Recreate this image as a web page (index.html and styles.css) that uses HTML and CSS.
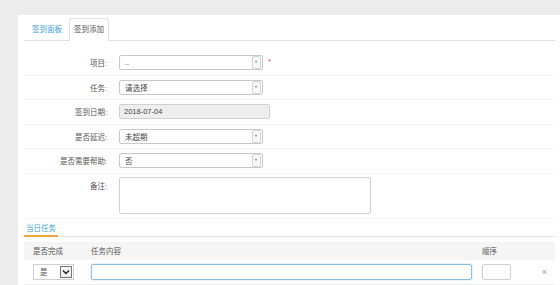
FILE: index.html
```html
<!DOCTYPE html>
<html lang="zh-CN">
<head>
    <meta charset="UTF-8">
    <title>签到添加</title>
    <link rel="stylesheet" href="styles.css">
</head>
<body>
    <div class="page">
        <div class="panel">
            <div class="tabs">
                <a href="#" class="tab">签到面板</a>
                <a href="#" class="tab active">签到添加</a>
            </div>

            <form class="form">
                <div class="row">
                    <label class="label">项目:</label>
                    <div class="select"><span class="value">..</span><span class="arrow"></span></div>
                    <span class="required">*</span>
                </div>
                <div class="row">
                    <label class="label">任务:</label>
                    <div class="select"><span class="value">请选择</span><span class="arrow"></span></div>
                </div>
                <div class="row">
                    <label class="label">签到日期:</label>
                    <input class="text readonly" type="text" value="2018-07-04" readonly>
                </div>
                <div class="row">
                    <label class="label">是否延迟:</label>
                    <div class="select"><span class="value">未超期</span><span class="arrow"></span></div>
                </div>
                <div class="row">
                    <label class="label">是否需要帮助:</label>
                    <div class="select"><span class="value">否</span><span class="arrow"></span></div>
                </div>
                <div class="row row-tall">
                    <label class="label">备注:</label>
                    <textarea class="memo"></textarea>
                </div>
            </form>

            <div class="section">
                <span class="section-title">当日任务</span>
            </div>

            <div class="task-table">
                <div class="task-head">
                    <div class="col-done">是否完成</div>
                    <div class="col-content">任务内容</div>
                    <div class="col-order">顺序</div>
                    <div class="col-del"></div>
                </div>
                <div class="task-row">
                    <div class="col-done">
                        <div class="mini-select">
                            <span>是</span>
                            <span class="mini-arrow">
                                <svg width="8" height="6" viewBox="0 0 8 6"><path d="M1 1.5 L4 4.5 L7 1.5" fill="none" stroke="#222" stroke-width="1.4"/></svg>
                            </span>
                        </div>
                    </div>
                    <div class="col-content"><input class="content-input" type="text"></div>
                    <div class="col-order"><input class="order-input" type="text"></div>
                    <div class="col-del"><span class="del">×</span></div>
                </div>
            </div>
        </div>
    </div>
</body>
</html>
```

FILE: styles.css
```css
body {
    margin: 0;
    background-color: #ececec;
    font-family: "Liberation Sans", "Noto Sans CJK SC", sans-serif;
    font-size: 7.5px;
    color: #555;
}
.page {
    padding: 15px 0 0 18px;
}
.panel {
    background-color: #fff;
    padding: 3px 5px 0 6px;
    height: 270px;
}
.tabs {
    display: flex;
    align-items: flex-end;
    height: 22px;
    padding-left: 3px;
    border-bottom: 1px solid #e2e2e2;
}
.tab {
    display: block;
    height: 22px;
    line-height: 22px;
    padding: 0 4px;
    margin-right: 2px;
    color: #3a9fd9;
    text-decoration: none;
    box-sizing: border-box;
    border: 1px solid transparent;
    border-bottom: none;
}
.tab.active {
    color: #555;
    border-color: #e2e2e2;
    border-radius: 3px 3px 0 0;
    background-color: #fff;
    height: 23px;
    margin-bottom: -1px;
}
.form {
    padding-top: 10px;
}
.row {
    display: flex;
    align-items: center;
    height: 24.5px;
    box-sizing: border-box;
    border-bottom: 1px solid #f4f4f4;
}
.row-tall {
    align-items: flex-start;
    height: 45px;
    padding-top: 3px;
}
.label {
    width: 83px;
    text-align: right;
    padding-right: 12px;
    color: #555;
}
.row-tall .label {
    padding-top: 3px;
}
.select {
    display: flex;
    align-items: center;
    justify-content: space-between;
    width: 144px;
    height: 15px;
    box-sizing: border-box;
    border: 1px solid #c9c9c9;
    border-radius: 2px;
    padding-left: 5px;
    padding-right: 1px;
    background-color: #fff;
}
.select .value {
    color: #444;
}
.select .arrow {
    position: relative;
    width: 7px;
    height: 11px;
    border: 1px solid #d6d6d6;
    border-radius: 2px;
    background-color: #f7f7f7;
}
.select .arrow::after {
    content: "";
    position: absolute;
    left: 2px;
    top: 4px;
    border-left: 1.5px solid transparent;
    border-right: 1.5px solid transparent;
    border-top: 2px solid #777;
}
.required {
    color: #e04a4a;
    margin-left: 5px;
    margin-top: -3px;
}
.text {
    width: 151px;
    height: 15px;
    box-sizing: border-box;
    border: 1px solid #d0d0d0;
    border-radius: 2px;
    padding: 0 4px;
    font: inherit;
    color: #444;
}
.text.readonly {
    background-color: #eee;
}
.memo {
    width: 252px;
    height: 37px;
    box-sizing: border-box;
    border: 1px solid #d0d0d0;
    border-radius: 2px;
    resize: none;
    margin: 0;
}
.section {
    margin-top: 3px;
    height: 14px;
    border-bottom: 1px solid #e4e4e4;
}
.section-title {
    display: inline-block;
    height: 13px;
    line-height: 13px;
    padding: 0 2px;
    color: #3a9fd9;
    border-bottom: 2px solid #f0a640;
}
.task-table {
    margin-top: 5px;
}
.task-head,
.task-row {
    display: flex;
    align-items: center;
}
.task-head {
    height: 18px;
    background-color: #f5f5f5;
    color: #555;
}
.task-row {
    height: 24px;
    border-bottom: 1px solid #eee;
}
.col-done {
    width: 67px;
    padding-left: 9px;
    box-sizing: border-box;
}
.col-content {
    width: 391px;
    box-sizing: border-box;
}
.col-order {
    width: 50px;
}
.col-del {
    flex: 1;
    text-align: right;
    padding-right: 8px;
}
.mini-select {
    display: flex;
    align-items: center;
    justify-content: space-between;
    width: 41px;
    height: 16px;
    box-sizing: border-box;
    border: 1px solid #d0d0d0;
    padding: 0 1px 0 6px;
    background-color: #fff;
}
.mini-arrow {
    display: flex;
    align-items: center;
    justify-content: center;
    width: 10px;
    height: 10px;
    border: 1px solid #777;
    background-color: #f3f3f3;
}
.content-input {
    width: 381px;
    height: 16px;
    box-sizing: border-box;
    border: 1px solid #8fbde6;
    border-radius: 2px;
    box-shadow: 0 0 2px rgba(102, 175, 233, 0.5);
    margin: 0;
}
.order-input {
    width: 29px;
    height: 16px;
    box-sizing: border-box;
    border: 1px solid #d0d0d0;
    border-radius: 2px;
    margin: 0;
}
.del {
    color: #999;
    font-size: 9px;
}
```
